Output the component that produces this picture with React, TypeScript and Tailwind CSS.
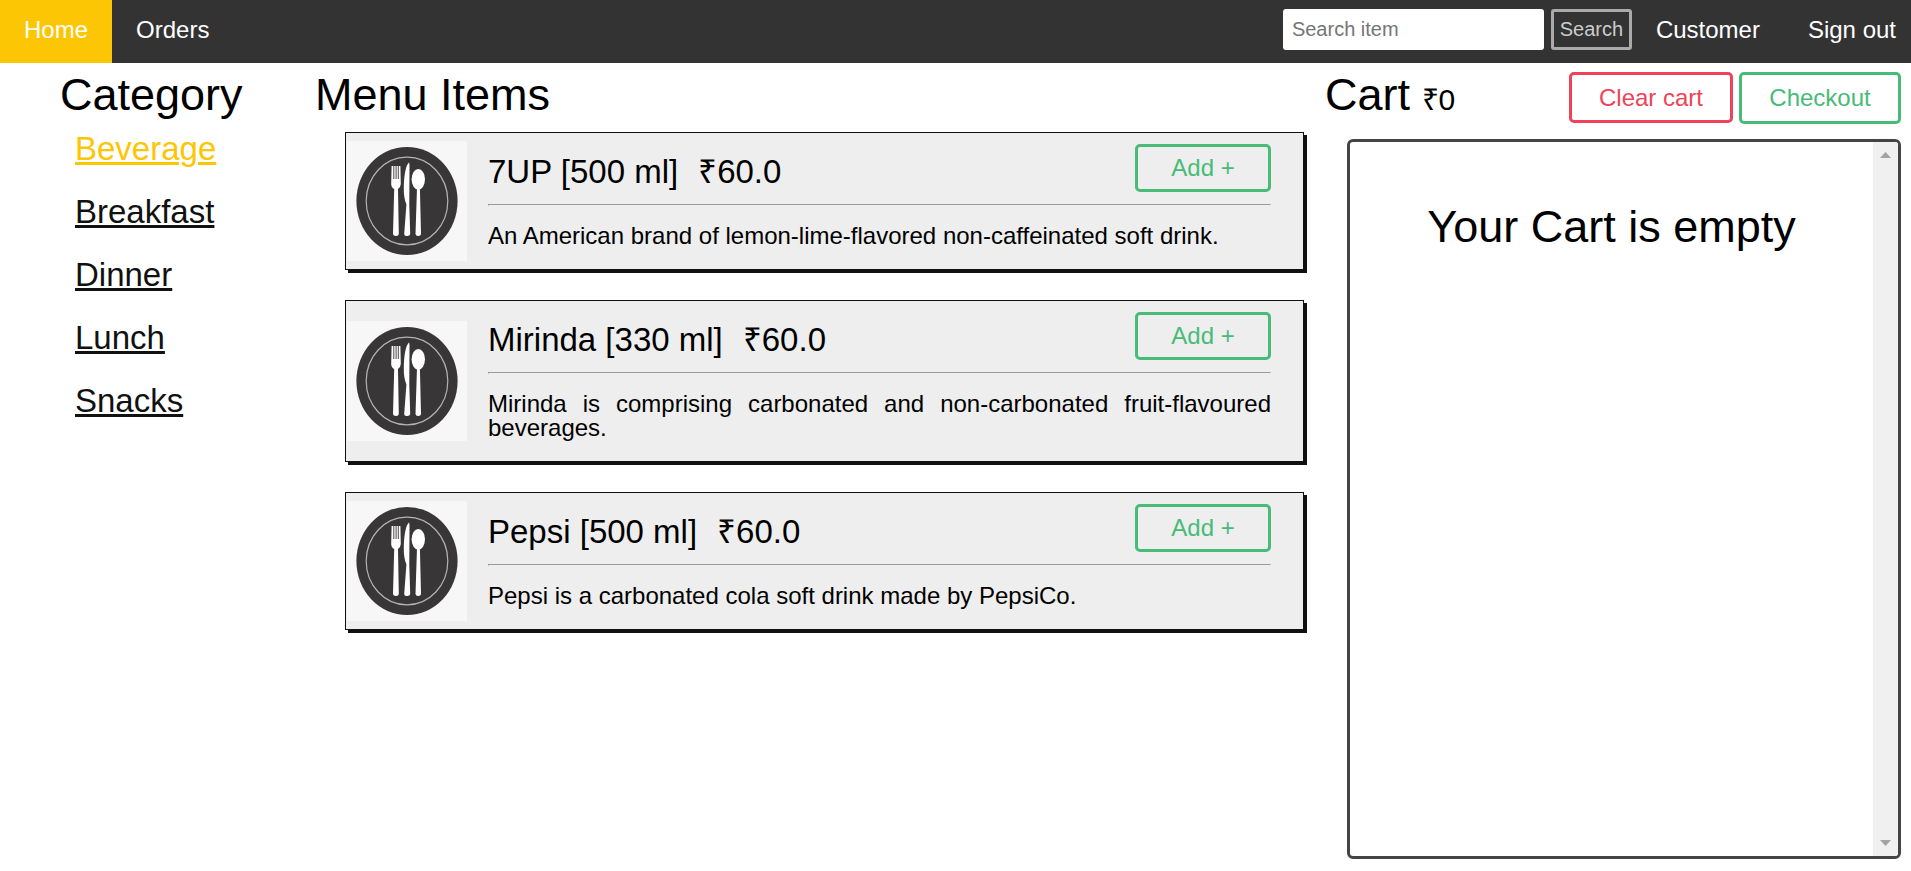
const categories = ["Beverage", "Breakfast", "Dinner", "Lunch", "Snacks"];

const items = [
  { name: "7UP [500 ml]", price: "₹60.0", text: "An American brand of lemon-lime-flavored non-caffeinated soft drink." },
  { name: "Mirinda [330 ml]", price: "₹60.0", text: "Mirinda is comprising carbonated and non-carbonated fruit-flavoured beverages." },
  { name: "Pepsi [500 ml]", price: "₹60.0", text: "Pepsi is a carbonated cola soft drink made by PepsiCo." },
];

function Plate() {
  return (
    <svg width="120" height="120" viewBox="0 0 120 120" className="block shrink-0 bg-[#f7f7f7]">
      <ellipse cx="60" cy="60" rx="50.6" ry="54" fill="#393637" />
      <ellipse cx="60" cy="60" rx="40.8" ry="43.8" fill="none" stroke="#b5b4b4" strokeWidth="1.2" />
      <g fill="#fff">
        <path d="M44.6 25H53.4L53.8 43Q53.6 46.5 51 48L51.8 93Q51.7 95 49 95Q46.2 95 46 93L47.2 48Q44.3 46.5 44.2 43Z" />
        <path d="M61.9 21.6Q62.6 22 62.5 27L62.3 63.5L63.2 93Q63 95 60.2 95Q57.3 95 57.2 93L59.4 63.5C57.6 59 56.7 54 56.8 48C56.9 36 58.2 25.5 61.9 21.6Z" />
        <ellipse cx="71.3" cy="38.3" rx="6.7" ry="10.4" />
        <path d="M70 47H72.9L74 93Q73.9 95 71.2 95Q68.6 95 68.5 93Z" />
      </g>
      <path d="M46.8 25V38M49.1 25V38M51.3 25V38" stroke="#393637" strokeWidth="0.9" />
    </svg>
  );
}

function Card({ item }: { item: (typeof items)[number] }) {
  return (
    <article className="flex items-center border border-[#111] bg-[#eee] pl-px shadow-[3px_3px_0_#111]">
      <Plate />
      <div className="ml-[21px] mr-8 flex-1 self-start pb-[21px] pt-[11px]">
        <div className="flex h-[60px] items-start justify-between">
          <h2 className="flex gap-5 pt-[11px] text-[33px] leading-[33px]">
            <span>{item.name}</span>
            <span>{item.price}</span>
          </h2>
          <button className="h-12 w-[136px] rounded-[5px] border-3 border-[#48bb78] text-2xl leading-6 text-[#48bb78]">Add +</button>
        </div>
        <hr className="h-0.5 border border-b-[#eee] border-l-[#9a9a9a] border-r-[#eee] border-t-[#9a9a9a]" />
        <p className="pt-[18px] text-justify text-2xl leading-6">{item.text}</p>
      </div>
    </article>
  );
}

export default function App() {
  return (
    <div className="flex h-[871px] w-[1911px] flex-col bg-white font-['Liberation_Sans',Arial,sans-serif] text-black">
      <nav className="flex h-[63px] shrink-0 bg-[#333] text-2xl leading-6 text-white">
        <a className="bg-[#fdc605] px-6 pt-[18px]">Home</a>
        <a className="px-6 pt-[18px]">Orders</a>
        <form className="ml-auto flex gap-[7px] pt-[9px]">
          <input placeholder="Search item" className="h-[41px] w-[261px] rounded-[3px] bg-white px-[9px] text-xl placeholder:text-[#757575]" />
          <button type="button" className="h-[41px] w-[81px] rounded-[3px] border-3 border-[#aaa] pb-px text-xl leading-5 text-[#ccc]">Search</button>
        </form>
        <a className="px-6 pt-[18px]">Customer</a>
        <a className="pl-6 pr-[15px] pt-[18px]">Sign out</a>
      </nav>

      <main className="flex flex-1">
        <aside className="w-[315px] pl-[60px] pt-[9px]">
          <h1 className="text-[45px] leading-[45px]">Category</h1>
          <ul className="flex flex-col gap-[30px] pl-[15px] pt-[15px] text-[33px] leading-[33px]">
            {categories.map((name, i) => (
              <li
                key={name}
                className={
                  i === 0
                    ? "text-[#fdc605] underline decoration-3 underline-offset-2"
                    : "text-[#111] underline decoration-3 underline-offset-2"
                }
              >
                {name}
              </li>
            ))}
          </ul>
        </aside>

        <section className="w-[989px] pt-[9px]">
          <h1 className="text-[45px] leading-[45px]">Menu Items</h1>
          <div className="flex flex-col gap-[30px] pl-[30px] pt-[15px]">
            {items.map((item) => (
              <Card key={item.name} item={item} />
            ))}
          </div>
        </section>

        <section className="flex flex-1 flex-col pb-3 pl-[21px] pr-2.5">
          <header className="flex h-[76px] items-start">
            <h1 className="pt-[9px] text-[45px] leading-[45px]">
              Cart <span className="-ml-px text-[30px] leading-none">₹0</span>
            </h1>
            <button className="ml-auto mt-[9px] h-[51px] w-[164px] rounded-[5px] border-3 border-[#ef4359] text-2xl leading-6 text-[#ef4359]">Clear cart</button>
            <button className="ml-1.5 mt-[9px] h-[52px] w-[162px] rounded-[5px] border-3 border-[#48bb78] pb-px text-2xl leading-6 text-[#48bb78]">Checkout</button>
          </header>
          <div className="ml-[22px] flex flex-1 overflow-hidden rounded-md border-3 border-[#444]">
            <p className="flex-1 pt-[62px] text-center text-[45px] leading-[45px]">Your Cart is empty</p>
            <div className="flex w-[25px] flex-col items-center justify-between bg-[#f0f0f0] pb-2.5 pt-2.5">
              <svg width="11" height="6" viewBox="0 0 11 6" className="block">
                <path d="M0 6L5.5 0L11 6Z" fill="#a3a3a3" />
              </svg>
              <svg width="11" height="6" viewBox="0 0 11 6" className="block">
                <path d="M0 0L5.5 6L11 0Z" fill="#a3a3a3" />
              </svg>
            </div>
          </div>
        </section>
      </main>
    </div>
  );
}
